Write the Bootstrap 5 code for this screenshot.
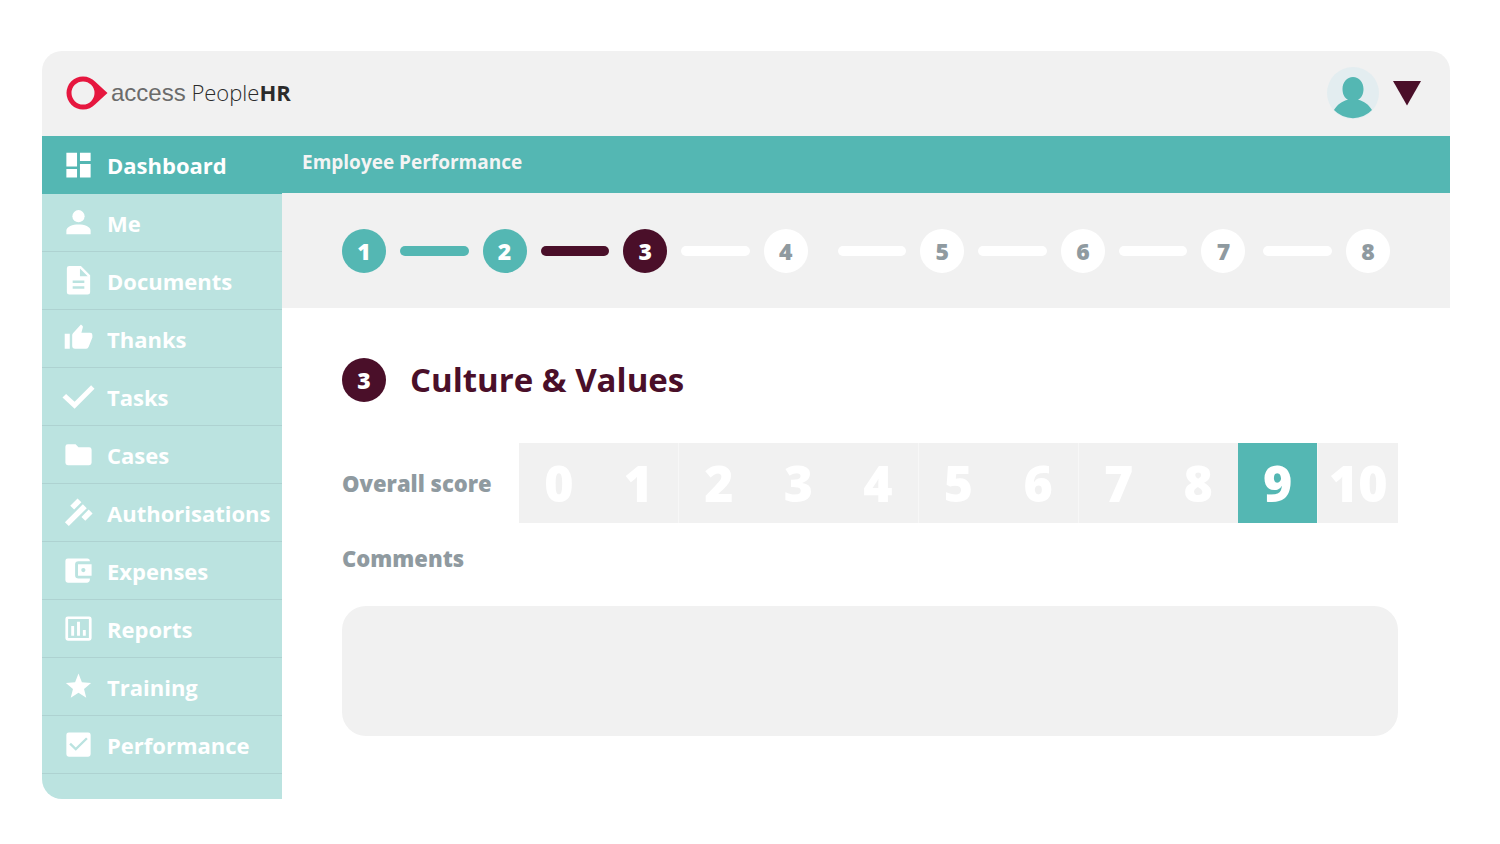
<!DOCTYPE html>
<html lang="en">
<head>
<meta charset="utf-8">
<meta name="viewport" content="width=device-width, initial-scale=1">
<title>Employee Performance</title>
<link href="https://cdn.jsdelivr.net/npm/bootstrap@5.3.0/dist/css/bootstrap.min.css" rel="stylesheet">
<style>
  :root { --teal: #54b7b3; --mint: #bbe3e0; --plum: #4a0f29; --panel: #f1f1f1; --slate: #8f9aa0; }
  body { font-family: "Open Sans", "Noto Sans", sans-serif; background: #fff; }
  .shell { padding: 51px 50px 45px 42px; }
  .app { border-radius: 20px; overflow: hidden; }
  .topbar { background: var(--panel); height: 85px; padding: 0 29px 2px 23px; }
  .brand { color: #2b2b2b; font-size: 22px; font-weight: 300; line-height: 30px; gap: 2px; }
  .brand .word { font-family: "Liberation Sans", sans-serif; font-size: 24px; font-weight: 400; color: #6b6b6b; }
  .brand b { font-weight: 700; }
  .menu-btn { margin-left: 14px; }
  .side { width: 240px; background: var(--mint); padding-bottom: 25px; }
  .side .nav-link { height: 58px; padding: 0 0 0 20px; gap: 12px; color: #fff; font-size: 22px; font-weight: 700; line-height: 32px; border-bottom: 1px solid #aed2d1; }
  .side .nav-link.active { background: var(--teal); border-color: var(--teal); }
  .side svg { width: 33px; height: 34px; flex: none; fill: currentColor; }
  .titlebar { background: var(--teal); color: #f4f4f4; height: 57px; padding: 0 20px 5px; font-size: 19px; font-weight: 700; }
  .steps { background: var(--panel); height: 115px; padding: 0 60px; gap: 14px; }
  .disc { width: 44px; height: 44px; border-radius: 50%; font-size: 23px; font-weight: 800; line-height: 32px; flex: none; background: #fff; color: var(--slate); text-decoration: none; }
  .bar { height: 10px; border-radius: 5px; background: #fff; }
  .is-done { background: var(--teal); color: #fff; }
  .is-now { background: var(--plum); color: #fff; }
  .content { padding: 50px 52px 62px 60px; }
  .section-title { color: var(--plum); font-size: 33px; font-weight: 700; line-height: 44px; }
  .field-label { color: var(--slate); font-size: 22px; font-weight: 800; line-height: 32px; }
  .score-row { margin: 41px 0 19px; }
  .score-label { width: 177px; }
  .scores .btn { height: 80px; padding: 0; border: 0; border-radius: 0; background: var(--panel); color: #fff; font-size: 50px; font-weight: 800; line-height: 80px; flex: 1 1 0; min-width: 0; }
  .scores .btn.split { border-left: 1px solid #f7f7f7; }
  .scores .btn-check:checked + .btn { background: var(--teal); color: #fff; }
  .comments { height: 130px; margin-top: 32px; border: 0; border-radius: 24px; background: var(--panel); resize: none; }
</style>
</head>
<body>
<div class="shell">
<div class="app">
  <header class="topbar d-flex align-items-center justify-content-between">
    <a href="#" class="brand d-flex align-items-center text-decoration-none">
      <svg width="44" height="36" viewBox="0 0 44 36" aria-hidden="true">
        <path fill="#e6173f" fill-rule="evenodd" d="M18 1.500C23 1.500 27 3.500 30 6.500L42.500 18L30 29.500C27 32.500 23 34.500 18 34.500A16.500 16.500 0 0 1 18 1.500ZM18 6.500A11.500 11.500 0 1 0 18 29.500A11.500 11.500 0 1 0 18 6.500Z"/>
      </svg>
      <span><span class="word">access</span> People<b>HR</b></span>
    </a>
    <div class="d-flex align-items-center">
      <svg width="52" height="52" viewBox="0 0 52 52" role="img" aria-label="Profile">
        <circle cx="26" cy="26" r="26" fill="#e3edf0"/>
        <path fill="#54b7b3" d="M26 10C32 10 36.500 15 36.500 22C36.500 27 34.500 31 31 32.800C37 34 42 38 45 43A26 26 0 0 1 7 43C10 38 15 34 21 32.800C17.500 31 15.500 27 15.500 22C15.500 15 20 10 26 10Z"/>
      </svg>
      <button type="button" class="menu-btn btn p-0 border-0 d-flex" aria-label="Account menu">
        <svg width="28" height="26" viewBox="0 0 28 26"><path fill="#4a0f29" d="M0 1H28L14 25.500Z"/></svg>
      </button>
    </div>
  </header>
  <div class="d-flex">
    <nav class="side nav flex-column flex-nowrap flex-shrink-0">
      <a class="nav-link active d-flex align-items-center" href="#"><svg viewBox="0 0 34 34"><path d="M4.500 4.500h11v14h-11zM18.500 4.500h11v8.500h-11zM4.500 21h11v9h-11zM18.500 16h11v14h-11z"/></svg>Dashboard</a>
      <a class="nav-link d-flex align-items-center" href="#"><svg viewBox="0 0 34 34"><circle cx="17" cy="10" r="6.300"/><path d="M4.500 28.500V25C4.500 20.500 11 18.500 17 18.500S29.500 20.500 29.500 25V28.500Z"/></svg>Me</a>
      <a class="nav-link d-flex align-items-center" href="#"><svg viewBox="0 0 34 34"><path fill-rule="evenodd" d="M7.500 1.500H19.500L29 11V28.500A2.500 2.500 0 0 1 26.500 31H7.500A2.500 2.500 0 0 1 5 28.500V4A2.500 2.500 0 0 1 7.500 1.500ZM18.500 4V12H26.500ZM11 16.500V19H23V16.500ZM11 22.500V25H23V22.500Z"/></svg>Documents</a>
      <a class="nav-link d-flex align-items-center" href="#"><svg viewBox="0 0 34 34"><path d="M2.800 11.500H8V27H2.800ZM10.500 13Q10.500 12 11.300 11L19.500 2L21 3.300Q21.800 4 21.500 5L20 10.500H29Q31.300 10.500 31.300 13V15.500L27.500 25Q26.700 27 25 27H13.500Q10.500 27 10.500 24Z"/></svg>Thanks</a>
      <a class="nav-link d-flex align-items-center" href="#"><svg viewBox="0 0 34 34"><path d="M.5 17.500L4.200 14L13 22L30 5L33.500 8.500L13 29Z"/></svg>Tasks</a>
      <a class="nav-link d-flex align-items-center" href="#"><svg viewBox="0 0 34 34"><path d="M6 6H14L17 9H28Q30.500 9 30.500 11.500V25Q30.500 27.500 28 27.500H6Q3.500 27.500 3.500 25V8.500Q3.500 6 6 6Z"/></svg>Cases</a>
      <a class="nav-link d-flex align-items-center" href="#"><svg viewBox="0 0 34 34"><path d="M3 26.500L21.500 8L25.500 12L7 30.500ZM8.500 9.500L16 2L20 6L12.500 13.500ZM20 21L27.500 13.500L31.500 17.500L24 25Z"/></svg>Authorisations</a>
      <a class="nav-link d-flex align-items-center" href="#"><svg viewBox="0 0 34 34"><path fill-rule="evenodd" d="M6 4H26Q28.800 4 28.800 7H17Q13.500 7 13.500 10V21.500Q13.500 24.800 17 24.800H28.800Q28.800 29 26 29H6Q3.500 29 3.500 26.500V6.500Q3.500 4 6 4ZM16.500 10H30.500V22H16.500ZM22 13.800A2.200 2.200 0 1 0 22 18.200A2.200 2.200 0 1 0 22 13.800Z"/></svg>Expenses</a>
      <a class="nav-link d-flex align-items-center" href="#"><svg viewBox="0 0 34 34"><path fill-rule="evenodd" d="M6 4H28Q30.500 4 30.500 6.500V26.500Q30.500 29 28 29H6Q3.500 29 3.500 26.500V6.500Q3.500 4 6 4ZM6.300 6.800V26.200H27.700V6.800ZM9.500 14H12.500V24H9.500ZM15.500 9.500H18.500V24H15.500ZM21.500 18H24.500V24H21.500Z"/></svg>Reports</a>
      <a class="nav-link d-flex align-items-center" href="#"><svg viewBox="0 0 34 34"><path d="M17 3L20.500 12.200L30 13L22.700 19L25 28L17 23L9 28L11.300 19L4 13L13.500 12.200Z"/></svg>Training</a>
      <a class="nav-link d-flex align-items-center" href="#"><svg viewBox="0 0 34 34"><path fill-rule="evenodd" d="M7 4H27Q29.500 4 29.500 6.500V26.500Q29.500 29 27 29H7Q4.500 29 4.500 26.500V6.500Q4.500 4 7 4ZM7.500 16.500L14.200 23L26.500 10.800L24.800 9.200L14.200 19.500L9.200 14.800Z"/></svg>Performance</a>
    </nav>
    <main class="flex-grow-1">
      <div class="titlebar d-flex align-items-center">Employee Performance</div>
      <div class="steps d-flex align-items-center">
        <a href="#" class="disc is-done d-flex align-items-center justify-content-center">1</a>
        <span class="bar is-done flex-fill"></span>
        <a href="#" class="disc is-done d-flex align-items-center justify-content-center">2</a>
        <span class="bar is-now flex-fill"></span>
        <a href="#" class="disc is-now d-flex align-items-center justify-content-center">3</a>
        <span class="bar flex-fill"></span>
        <a href="#" class="disc d-flex align-items-center justify-content-center">4</a>
        <span class="bar flex-fill ms-3"></span>
        <a href="#" class="disc d-flex align-items-center justify-content-center">5</a>
        <span class="bar flex-fill"></span>
        <a href="#" class="disc d-flex align-items-center justify-content-center">6</a>
        <span class="bar flex-fill"></span>
        <a href="#" class="disc d-flex align-items-center justify-content-center">7</a>
        <span class="bar flex-fill ms-1"></span>
        <a href="#" class="disc d-flex align-items-center justify-content-center">8</a>
      </div>
      <form class="content">
        <div class="d-flex align-items-center">
          <span class="disc is-now d-flex align-items-center justify-content-center">3</span>
          <h1 class="section-title mb-0 ms-4">Culture &amp; Values</h1>
        </div>
        <fieldset class="score-row d-flex align-items-center" aria-labelledby="score">
          <span id="score" class="field-label score-label flex-shrink-0">Overall score</span>
          <div class="scores d-flex flex-fill">
            <input class="btn-check" type="radio" name="score" id="s0"><label class="btn" for="s0">0</label>
            <input class="btn-check" type="radio" name="score" id="s1"><label class="btn" for="s1">1</label>
            <input class="btn-check" type="radio" name="score" id="s2"><label class="btn split" for="s2">2</label>
            <input class="btn-check" type="radio" name="score" id="s3"><label class="btn" for="s3">3</label>
            <input class="btn-check" type="radio" name="score" id="s4"><label class="btn" for="s4">4</label>
            <input class="btn-check" type="radio" name="score" id="s5"><label class="btn split" for="s5">5</label>
            <input class="btn-check" type="radio" name="score" id="s6"><label class="btn" for="s6">6</label>
            <input class="btn-check" type="radio" name="score" id="s7"><label class="btn split" for="s7">7</label>
            <input class="btn-check" type="radio" name="score" id="s8"><label class="btn" for="s8">8</label>
            <input class="btn-check" type="radio" name="score" id="s9" checked><label class="btn" for="s9">9</label>
            <input class="btn-check" type="radio" name="score" id="s10"><label class="btn split" for="s10">10</label>
          </div>
        </fieldset>
        <label for="comments" class="field-label d-block">Comments</label>
        <textarea id="comments" class="form-control comments"></textarea>
      </form>
    </main>
  </div>
</div>
</div>
<script src="https://cdn.jsdelivr.net/npm/bootstrap@5.3.0/dist/js/bootstrap.bundle.min.js"></script>
</body>
</html>
